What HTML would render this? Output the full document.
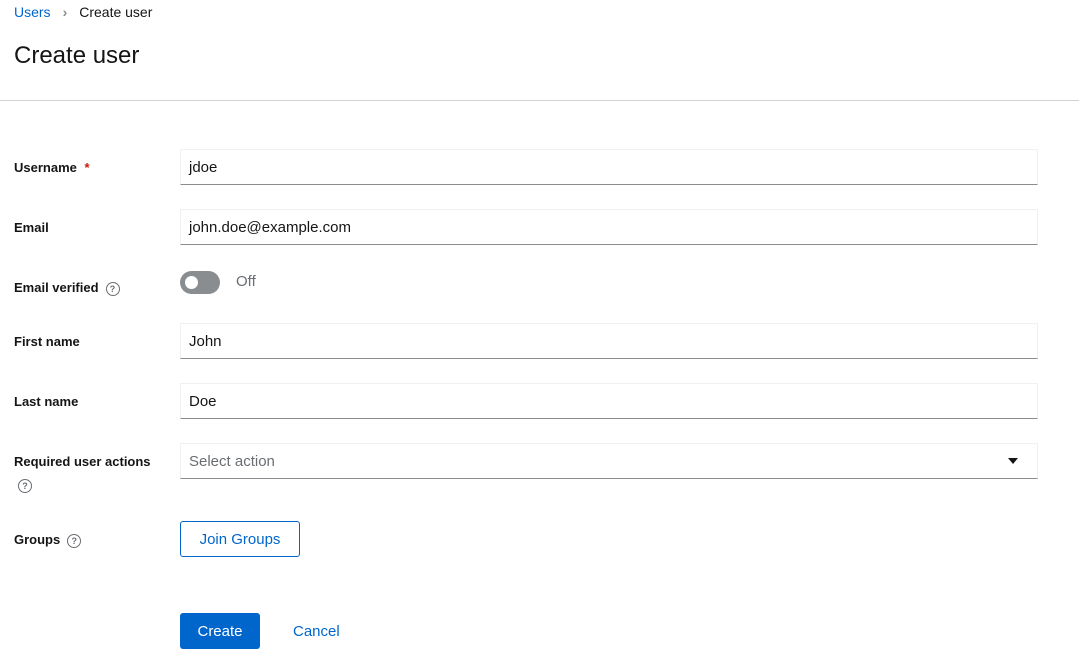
<!DOCTYPE html><html><head><style>
body{margin:0;width:1079px;height:663px;background:#fff;font-family:"Liberation Sans",sans-serif;color:#151515;position:relative;overflow:hidden}
.a{position:absolute}
.lbl{position:absolute;left:14px;font-size:13px;font-weight:bold}
.in{position:absolute;left:180px;height:34px;border:1px solid #f0f0f0;border-bottom:1px solid #8a8d90;font-size:15px;line-height:36px;padding-left:8px;box-sizing:content-box}
.q{display:inline-block;width:12px;height:12px;border:1.3px solid #6a6e73;border-radius:50%;font-size:9px;line-height:12px;text-align:center;color:#6a6e73;font-weight:bold;vertical-align:middle;margin-left:7px}
</style></head><body>
<div class="a" style="left:14px;top:4px;font-size:14px"><span style="color:#06c">Users</span><span style="color:#8a8d90;margin:0 12px 0 12px;font-weight:bold">›</span>Create user</div>
<div class="a" style="left:14px;top:42px;font-size:24px">Create user</div>
<div class="a" style="left:0;top:100px;width:1079px;height:1px;background:#d2d2d2"></div>
<div class="lbl" style="top:160px">Username <span style="color:#c9190b;margin-left:4px">*</span></div>
<div class="in" style="top:149px;width:848px">jdoe</div>
<div class="lbl" style="top:220px">Email</div>
<div class="in" style="top:209px;width:848px">john.doe@example.com</div>
<div class="lbl" style="top:280px">Email verified<span class="q">?</span></div>
<div class="a" style="left:180px;top:271px;width:40px;height:23px;border-radius:12px;background:#8a8d90"></div>
<div class="a" style="left:185px;top:276px;width:13px;height:13px;border-radius:50%;background:#fff"></div>
<div class="a" style="left:236px;top:273px;font-size:15px;color:#6a6e73">Off</div>
<div class="lbl" style="top:334px">First name</div>
<div class="in" style="top:323px;width:848px">John</div>
<div class="lbl" style="top:394px">Last name</div>
<div class="in" style="top:383px;width:848px">Doe</div>
<div class="lbl" style="top:454px">Required user actions</div>
<div class="a" style="left:14px;top:477px"><span class="q" style="margin-left:4px">?</span></div>
<div class="in" style="top:443px;width:848px;color:#6a6e73">Select action</div>
<div class="a" style="left:1008px;top:458px;width:0;height:0;border-left:5px solid transparent;border-right:5px solid transparent;border-top:6px solid #151515"></div>
<div class="lbl" style="top:532px">Groups<span class="q">?</span></div>
<div class="a" style="left:180px;top:521px;width:118px;height:34px;border:1px solid #06c;border-radius:3px;color:#06c;font-size:15px;line-height:36px;text-align:center">Join Groups</div>
<div class="a" style="left:180px;top:613px;width:80px;height:36px;background:#06c;border-radius:3px;color:#fff;font-size:15px;line-height:38px;text-align:center">Create</div>
<div class="a" style="left:293px;top:623px;color:#06c;font-size:15px">Cancel</div>
</body></html>
